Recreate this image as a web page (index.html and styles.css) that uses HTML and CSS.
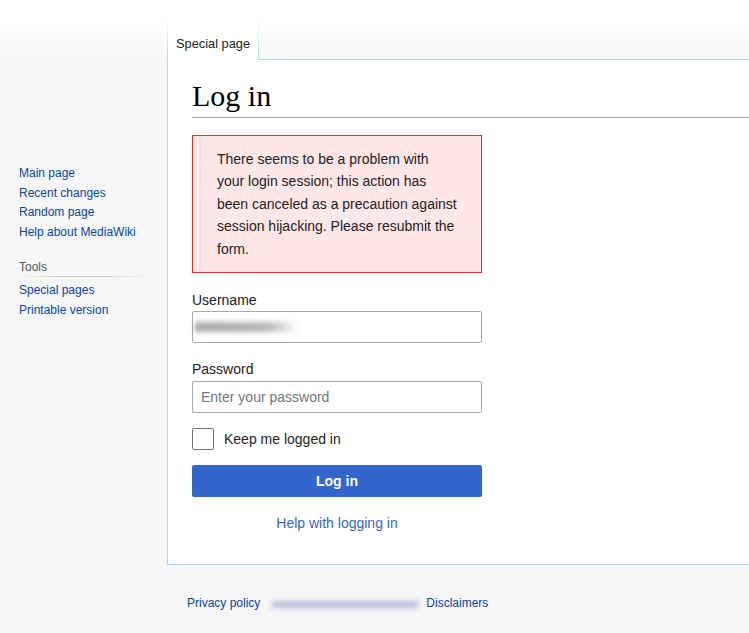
FILE: index.html
```html
<!DOCTYPE html>
<html lang="en">
<head>
    <meta charset="UTF-8">
    <meta name="viewport" content="width=device-width, initial-scale=1.0">
    <title>Log in - MediaWiki</title>
    <link rel="stylesheet" href="styles.css">
</head>
<body>

<div class="page">
    <div class="sidebar">
        <div class="portal">
            <ul>
                <li><a href="#">Main page</a></li>
                <li><a href="#">Recent changes</a></li>
                <li><a href="#">Random page</a></li>
                <li><a href="#">Help about MediaWiki</a></li>
            </ul>
        </div>
        <div class="portal">
            <h3>Tools</h3>
            <ul>
                <li><a href="#">Special pages</a></li>
                <li><a href="#">Printable version</a></li>
            </ul>
        </div>
    </div>

    <div class="main">
        <div class="tabs">
            <div class="tab">Special page</div>
            <div class="tab-rest"></div>
        </div>

        <div class="content">
            <h1>Log in</h1>

            <div class="errorbox">
                There seems to be a problem with your login session; this action has been canceled as a precaution against session hijacking. Please resubmit the form.
            </div>

            <form class="login-form" onsubmit="return false">
                <label class="field-label" for="wpName">Username</label>
                <div class="field-wrap">
                    <input class="field" id="wpName" type="text">
                    <span class="blur-name"></span>
                </div>

                <label class="field-label second" for="wpPassword">Password</label>
                <input class="field" id="wpPassword" type="password" placeholder="Enter your password">

                <div class="remember">
                    <input class="check" id="wpRemember" type="checkbox">
                    <label for="wpRemember">Keep me logged in</label>
                </div>

                <button class="submit" type="submit">Log in</button>

                <div class="help"><a href="#">Help with logging in</a></div>
            </form>
        </div>

        <div class="footer">
            <a href="#">Privacy policy</a>
            <span class="blur-link"></span>
            <a href="#">Disclaimers</a>
        </div>
    </div>
</div>

</body>
</html>
```

FILE: styles.css
```css
html, body {
    overflow: hidden;
}
body {
    margin: 0;
    min-height: 633px;
    background: #f6f6f6 linear-gradient(to bottom, #fff 0, #fff 22px, #f6f6f6 62px) no-repeat;
    color: #222;
    font-family: "Liberation Sans", Arial, sans-serif;
}
a {
    color: #0645ad;
    text-decoration: none;
}
.page {
    display: flex;
    width: 800px;
}
.sidebar {
    width: 167px;
    flex-shrink: 0;
    padding-top: 164px;
    font-size: 12px;
}
.portal {
    margin: 0 0 0 19px;
}
.portal ul {
    list-style: none;
    margin: 0;
    padding: 0;
}
.portal li {
    padding: 3px 0;
    line-height: 13.5px;
}
.portal h3 {
    margin: 15px 0 4px 0;
    padding: 3px 0;
    font-size: 12px;
    font-weight: normal;
    line-height: 14px;
    color: #54595d;
    width: 128px;
    background-image: linear-gradient(to right, rgba(200,204,209,0) 0, #c8ccd1 33%, #c8ccd1 66%, rgba(200,204,209,0) 100%);
    background-size: 100% 1px;
    background-position: bottom left;
    background-repeat: no-repeat;
}
.main {
    flex: 1;
}
.tabs {
    display: flex;
    height: 60px;
}
.tab {
    margin-top: 20px;
    height: 40px;
    box-sizing: border-box;
    padding: 16px 8px 0 8px;
    background: #fff;
    font-size: 12.8px;
    line-height: 16px;
    color: #222;
    border-style: solid;
    border-width: 0 1px;
    border-image: linear-gradient(to bottom, rgba(167,215,249,0) 0, #a7d7f9 100%) 1;
}
.tab-rest {
    flex: 1;
    box-sizing: border-box;
    height: 60px;
    border-bottom: 1px solid #a7d7f9;
}
.content {
    background: #fff;
    border-left: 1px solid #a7d7f9;
    border-bottom: 1px solid #a7d7f9;
    padding: 20px 24px 30px 24px;
}
h1 {
    margin: 0 0 17px 0;
    padding-bottom: 6px;
    font-family: "Liberation Serif", "Times New Roman", serif;
    font-size: 30px;
    font-weight: normal;
    line-height: 31px;
    color: #000;
    border-bottom: 1px solid #a2a9b1;
}
.errorbox {
    width: 290px;
    box-sizing: border-box;
    padding: 12px 23px 12px 24px;
    background: #fee7e6;
    border: 1px solid #d33;
    font-size: 14px;
    line-height: 22.4px;
    color: #222;
    margin-bottom: 16px;
}
.login-form {
    width: 290px;
    font-size: 14px;
}
.field-label {
    display: block;
    line-height: 22.4px;
}
.field-label.second {
    margin-top: 15px;
}
.field-wrap {
    position: relative;
}
.field {
    display: block;
    width: 100%;
    height: 32px;
    box-sizing: border-box;
    margin: 0;
    padding: 6px 8px;
    border: 1px solid #a2a9b1;
    border-radius: 2px;
    font-family: "Liberation Sans", Arial, sans-serif;
    font-size: 14px;
    color: #222;
    background: #fff;
}
.field::placeholder {
    color: #72777d;
}
.blur-name {
    position: absolute;
    left: 3px;
    top: 11px;
    width: 104px;
    height: 10px;
    background: linear-gradient(to right, #a8a8a8, #b8b8b8 70%, rgba(200,200,200,0));
    filter: blur(2.5px);
}
.remember {
    display: flex;
    align-items: center;
    margin-top: 15px;
    line-height: 22px;
}
.check {
    appearance: none;
    width: 22px;
    height: 22px;
    box-sizing: border-box;
    margin: 0 10px 0 0;
    border: 1px solid #72777d;
    border-radius: 2px;
    background: #fff;
}
.submit {
    display: block;
    width: 100%;
    height: 32px;
    margin-top: 15px;
    border: none;
    border-radius: 2px;
    background-color: #36c;
    color: #fff;
    font-family: "Liberation Sans", Arial, sans-serif;
    font-size: 14px;
    font-weight: bold;
}
.help {
    text-align: center;
    margin-top: 15px;
    line-height: 22.4px;
}
.help a {
    color: #36c;
}
.footer {
    padding: 30px 20px;
    font-size: 12px;
    line-height: 16px;
    display: flex;
    align-items: center;
}
.blur-link {
    display: inline-block;
    width: 146px;
    height: 7px;
    margin: 2px 8px 0 12px;
    background: #b9bdd8;
    filter: blur(2.5px);
}
```
